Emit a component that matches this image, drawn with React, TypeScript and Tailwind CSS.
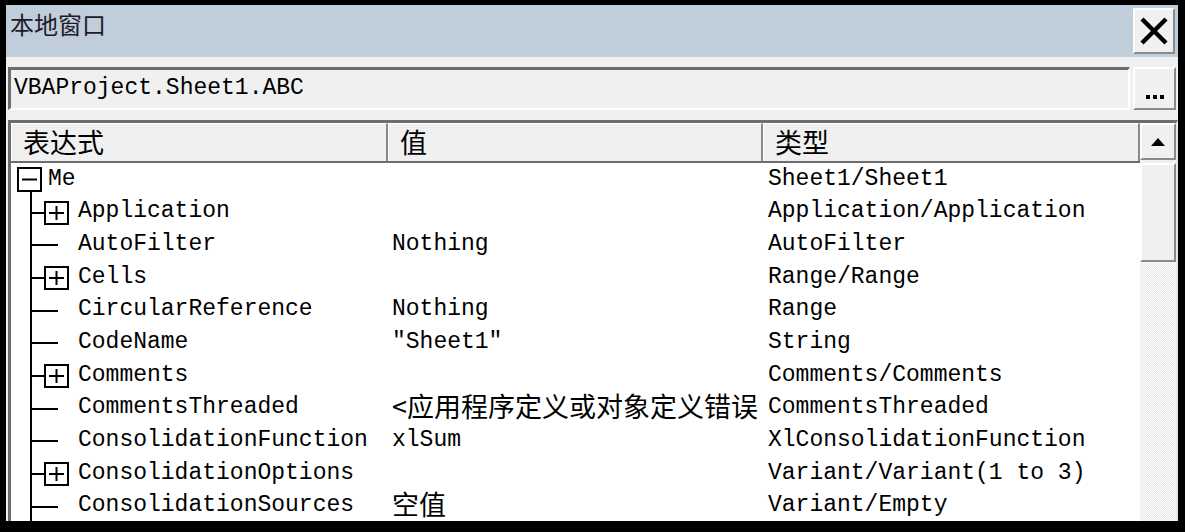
import React from "react";

type Row = {
  name: string;
  value?: string;
  cjkValue?: boolean;
  type: string;
  kind: "root" | "plus" | "leaf";
};

const rows: Row[] = [
  { name: "Me", type: "Sheet1/Sheet1", kind: "root" },
  { name: "Application", type: "Application/Application", kind: "plus" },
  { name: "AutoFilter", value: "Nothing", type: "AutoFilter", kind: "leaf" },
  { name: "Cells", type: "Range/Range", kind: "plus" },
  { name: "CircularReference", value: "Nothing", type: "Range", kind: "leaf" },
  { name: "CodeName", value: '"Sheet1"', type: "String", kind: "leaf" },
  { name: "Comments", type: "Comments/Comments", kind: "plus" },
  {
    name: "CommentsThreaded",
    value: "<应用程序定义或对象定义错误",
    cjkValue: true,
    type: "CommentsThreaded",
    kind: "leaf",
  },
  { name: "ConsolidationFunction", value: "xlSum", type: "XlConsolidationFunction", kind: "leaf" },
  { name: "ConsolidationOptions", type: "Variant/Variant(1 to 3)", kind: "plus" },
  { name: "ConsolidationSources", value: "空值", cjkValue: true, type: "Variant/Empty", kind: "leaf" },
];

function TreeGutter({ kind }: { kind: Row["kind"] }) {
  if (kind === "root") {
    return (
      <svg width="37" height="33" className="shrink-0 overflow-visible">
        <rect x="7" y="5" width="23" height="23" fill="white" stroke="black" strokeWidth="2" />
        <line x1="11" y1="16.5" x2="26" y2="16.5" stroke="black" strokeWidth="2" />
        <line x1="20" y1="29" x2="20" y2="35" stroke="black" strokeWidth="2" />
      </svg>
    );
  }
  return (
    <svg width="67" height="33" className="shrink-0 overflow-visible">
      <line x1="20" y1="-1" x2="20" y2="35" stroke="black" strokeWidth="2" />
      {kind === "plus" ? (
        <>
          <line x1="20" y1="17" x2="34" y2="17" stroke="black" strokeWidth="2" />
          <rect x="34" y="6" width="23" height="22" fill="white" stroke="black" strokeWidth="2" />
          <line x1="38" y1="17" x2="53" y2="17" stroke="black" strokeWidth="2" />
          <line x1="45.5" y1="10" x2="45.5" y2="24" stroke="black" strokeWidth="2" />
        </>
      ) : (
        <line x1="20" y1="17" x2="47" y2="17" stroke="black" strokeWidth="2" />
      )}
    </svg>
  );
}

export default function App() {
  return (
    <div className="w-[1185px] h-[532px] bg-black pt-[5px] pl-[6px] pr-[7px] pb-[11px] overflow-hidden font-['Liberation_Mono','Noto_Sans_CJK_SC',monospace] text-black">
      <div className="h-full flex flex-col bg-[#f0f0f0]">
        {/* title bar */}
        <div className="h-[52px] shrink-0 bg-[#c0cdda] flex justify-between pl-[4px] pr-[3px]">
          <span className="pt-[5px] text-[24px] leading-[1.2] text-[#1c1c2a] font-['Noto_Sans_CJK_SC',sans-serif]">
            本地窗口
          </span>
          <button className="self-center w-[42px] h-[46px] bg-[#f0f0f0] border-t-2 border-l-2 border-white border-r-2 border-b-2 border-r-[#8a8a8a] border-b-[#8a8a8a] flex items-center justify-center">
            <svg width="30" height="30" viewBox="0 0 30 30">
              <line x1="3" y1="3" x2="27" y2="27" stroke="black" strokeWidth="4.5" />
              <line x1="27" y1="3" x2="3" y2="27" stroke="black" strokeWidth="4.5" />
            </svg>
          </button>
        </div>

        <div className="h-[10px] shrink-0" />

        {/* expression box */}
        <div className="h-[43px] shrink-0 flex gap-[3px] pl-[2px] pr-[2px]">
          <div className="flex-1 flex items-center pl-[3px] border-t-[3px] border-l-[3px] border-[#6d6d6d] border-b-2 border-r-2 border-b-white border-r-white text-[23px] leading-[1.2]">
            VBAProject.Sheet1.ABC
          </div>
          <button className="w-[43px] bg-[#f0f0f0] border-t-2 border-l-2 border-white border-r-2 border-b-2 border-r-[#8a8a8a] border-b-[#8a8a8a] flex items-end justify-center gap-[3px] pb-[9px]">
            <span className="w-[4px] h-[4px] bg-black" />
            <span className="w-[4px] h-[4px] bg-black" />
            <span className="w-[4px] h-[4px] bg-black" />
          </button>
        </div>

        <div className="h-[10px] shrink-0" />

        {/* locals list */}
        <div className="flex-1 min-h-0 flex ml-[2px] border-t-[3px] border-l-[3px] border-[#6d6d6d] border-r-2 border-r-[#e8e8e8] border-b-0 bg-white">
          <div className="flex-1 min-w-0 flex flex-col">
            <div className="h-[40px] shrink-0 flex bg-[#f0f0f0] border-b-2 border-[#6d6d6d] text-[27px] leading-[1.2] font-['Noto_Sans_CJK_SC',sans-serif]">
              <div className="w-[377px] flex items-center pl-[11px] border-t border-l border-white border-r-2 border-r-[#8a8a8a]">
                表达式
              </div>
              <div className="w-[375px] flex items-center pl-[11px] border-t border-l border-white border-r-2 border-r-[#8a8a8a]">
                值
              </div>
              <div className="flex-1 flex items-center pl-[11px] border-t border-l border-white border-r-2 border-r-[#8a8a8a]">
                类型
              </div>
            </div>
            <div className="flex-1 min-h-0">
              {rows.map((row, index) => (
                <div key={`${row.name}-${index}`} className="h-[32.7px] flex items-center text-[23px] leading-[1.2] whitespace-nowrap">
                  <div className="w-[377px] flex items-center">
                    <TreeGutter kind={row.kind} />
                    <span>{row.name}</span>
                  </div>
                  <div className="w-[375px] pl-[4px]">
                    {row.cjkValue ? (
                      <span className="text-[27px] leading-[1.2] font-['Noto_Sans_CJK_SC',sans-serif]">{row.value}</span>
                    ) : (
                      row.value
                    )}
                  </div>
                  <div className="flex-1 pl-[5px]">{row.type}</div>
                </div>
              ))}
            </div>
          </div>

          {/* scrollbar */}
          <div className="w-[36px] shrink-0 flex flex-col bg-[#f0f0f0]">
            <div className="h-[37px] shrink-0 flex items-center justify-center border-t-2 border-l-2 border-white border-r-2 border-b-2 border-r-[#8a8a8a] border-b-[#8a8a8a]">
              <svg width="14" height="8" viewBox="0 0 14 8">
                <polygon points="7,0 14,8 0,8" fill="black" />
              </svg>
            </div>
            <div className="h-[99px] shrink-0 mt-[3px] border-t-2 border-l-2 border-white border-r-2 border-b-2 border-r-[#8a8a8a] border-b-[#8a8a8a]" />
            <div className="flex-1 bg-[image:repeating-conic-gradient(#e6e6e6_0%_25%,#ffffff_0%_50%)] bg-[length:2px_2px]" />
          </div>
        </div>
      </div>
    </div>
  );
}
